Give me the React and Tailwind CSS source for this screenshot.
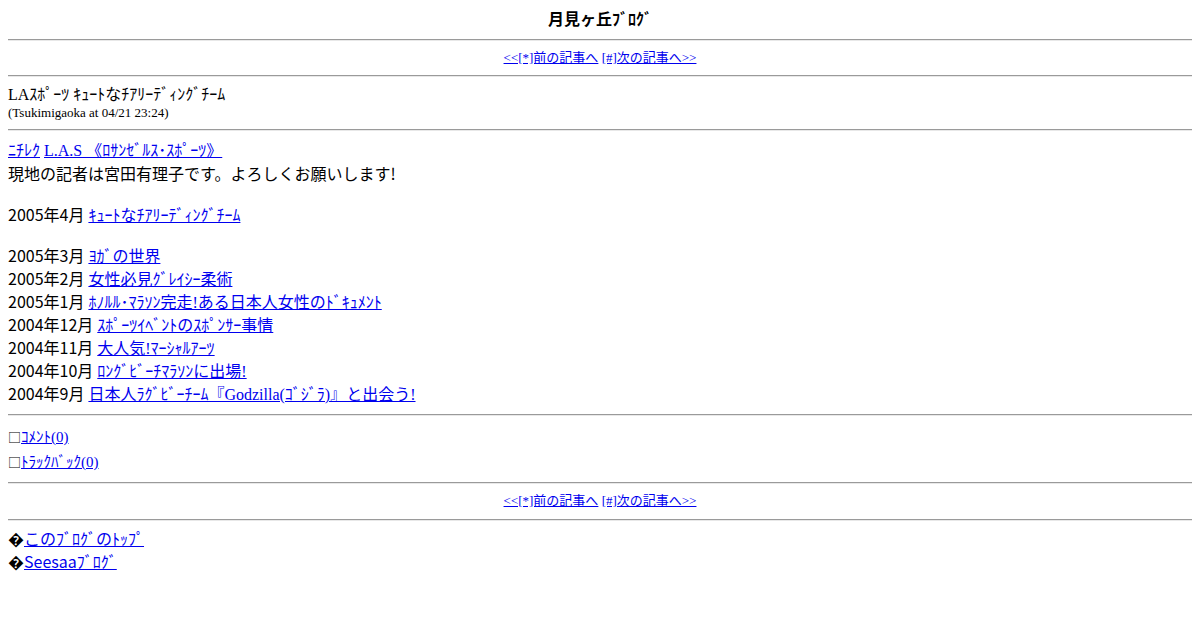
import React from "react";

const serif = "font-['Liberation_Serif','Noto_Sans_CJK_JP',serif]";
const sans = "font-['Noto_Sans_CJK_JP','Liberation_Sans',sans-serif]";
const link = "text-[#0000ee] underline";

function Rule({ className = "my-2" }) {
  return <div className={`${className} border-t border-b border-t-[#9a9a9a] border-b-[#e8e8e8]`} />;
}

function Nav() {
  return (
    <div className={`h-[19px] text-center text-[13px] leading-[18px] ${serif}`}>
      <a className={link}>{"<<[*]前の記事へ"}</a>{" "}
      <a className={link}>{"[#]次の記事へ>>"}</a>
    </div>
  );
}

const archives = [
  ["2005年3月", "ﾖｶﾞの世界"],
  ["2005年2月", "女性必見ｸﾞﾚｲｼｰ柔術"],
  ["2005年1月", "ﾎﾉﾙﾙ･ﾏﾗｿﾝ完走!ある日本人女性のﾄﾞｷｭﾒﾝﾄ"],
  ["2004年12月", "ｽﾎﾟｰﾂｲﾍﾞﾝﾄのｽﾎﾟﾝｻｰ事情"],
  ["2004年11月", "大人気!ﾏｰｼｬﾙｱｰﾂ"],
  ["2004年10月", "ﾛﾝｸﾞﾋﾞｰﾁﾏﾗｿﾝに出場!"],
  ["2004年9月", "日本人ﾗｸﾞﾋﾞｰﾁｰﾑ『Godzilla(ｺﾞｼﾞﾗ)』と出会う!"],
];

export default function App() {
  return (
    <div className={`bg-white text-black p-2 w-[1200px] h-[630px] ${serif}`}>
      <div className="h-[23px] text-center font-bold text-[16px] leading-[23px]">月見ヶ丘ﾌﾞﾛｸﾞ</div>
      <Rule />
      <Nav />
      <Rule className="mt-[7px] mb-2" />

      <div className="h-[20px] text-[16px] leading-[20px]">LAｽﾎﾟｰﾂ ｷｭｰﾄなﾁｱﾘｰﾃﾞｨﾝｸﾞﾁｰﾑ</div>
      <div className="h-[16px] text-[13px] leading-[16px]">(Tsukimigaoka at 04/21 23:24)</div>
      <Rule />

      <div className="h-[23px] text-[16px] leading-[23px]">
        <a className={link}>ﾆﾁﾚｸ</a>{" "}
        <a className={link}>L.A.S 《ﾛｻﾝｾﾞﾙｽ･ｽﾎﾟｰﾂ》</a>
      </div>
      <div className={`h-[23px] text-[16px] leading-[23px] ${sans}`}>現地の記者は宮田有理子です。よろしくお願いします!</div>

      <div className="mt-[18px] h-[23px] text-[16px] leading-[23px]">
        <span className={sans}>2005年4月</span>{" "}
        <a className={link}>ｷｭｰﾄなﾁｱﾘｰﾃﾞｨﾝｸﾞﾁｰﾑ</a>
      </div>

      <div className="mt-[18px] flex flex-col text-[16px] leading-[23px]">
        {archives.map(([date, title]) => (
          <div key={date} className="h-[23px]">
            <span className={sans}>{date}</span>{" "}
            <a className={link}>{title}</a>
          </div>
        ))}
      </div>
      <Rule className="mt-[9px] mb-2" />

      <div className="text-[15px] leading-[25px]">
        <div className="h-[25px]">
          <span className={`${sans} text-[13px]`}>□</span>
          <a className={link}>ｺﾒﾝﾄ(0)</a>
        </div>
        <div className="h-[25px]">
          <span className={`${sans} text-[13px]`}>□</span>
          <a className={link}>ﾄﾗｯｸﾊﾞｯｸ(0)</a>
        </div>
      </div>
      <Rule />
      <Nav />
      <Rule />

      <div className="-mt-[2px] text-[16px] leading-[23px]">
        <div className="h-[23px]">
          <span>�</span>
          <a className={`${link} ${sans}`}>このﾌﾞﾛｸﾞのﾄｯﾌﾟ</a>
        </div>
        <div className="h-[23px]">
          <span>�</span>
          <a className={`${link} ${sans}`}>Seesaaﾌﾞﾛｸﾞ</a>
        </div>
      </div>
    </div>
  );
}
